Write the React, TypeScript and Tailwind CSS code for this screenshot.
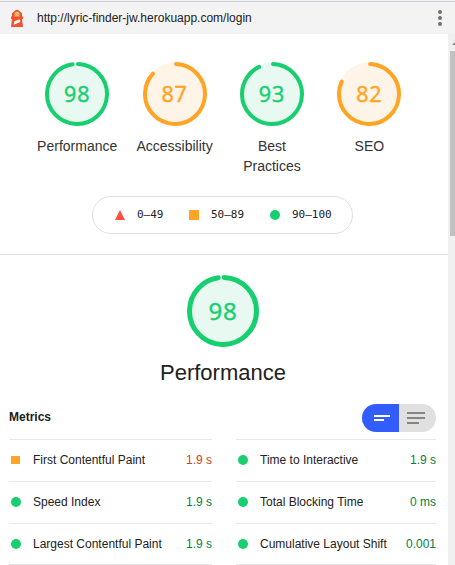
import React from "react";

type Rating = "pass" | "average";

const ringColor: Record<Rating, string> = { pass: "#18cf70", average: "#ffa424" };
const ringFill: Record<Rating, string> = { pass: "#e8f9f1", average: "#fff4e8" };

function Gauge({ score, rating, size, stroke, sweep, textClass }: {
  score: number; rating: Rating; size: number; stroke: number; sweep: number; textClass: string;
}) {
  const r = (size - stroke) / 2;
  const length = 2 * Math.PI * r;
  return (
    <div className="grid place-items-center">
      <svg className="col-start-1 row-start-1 block" width={size} height={size} viewBox={`0 0 ${size} ${size}`}>
        <circle cx={size / 2} cy={size / 2} r={size / 2 - 0.5} fill={ringFill[rating]} />
        <circle
          cx={size / 2} cy={size / 2} r={r} fill="none" stroke={ringColor[rating]} strokeWidth={stroke}
          strokeLinecap="round" strokeDasharray={`${length * sweep} ${length}`}
          transform={`rotate(-88 ${size / 2} ${size / 2})`}
        />
      </svg>
      <span className={`col-start-1 row-start-1 font-medium [-webkit-text-stroke:0.5px] ${textClass}`} style={{ color: ringColor[rating] }}>
        {score}
      </span>
    </div>
  );
}

const categories: { label: string; score: number; rating: Rating; sweep: number }[] = [
  { label: "Performance", score: 98, rating: "pass", sweep: 0.969 },
  { label: "Accessibility", score: 87, rating: "average", sweep: 0.862 },
  { label: "Best Practices", score: 93, rating: "pass", sweep: 0.922 },
  { label: "SEO", score: 82, rating: "average", sweep: 0.811 },
];

type Metric = { name: string; value: string; rating: Rating };

const leftMetrics: Metric[] = [
  { name: "First Contentful Paint", value: "1.9 s", rating: "average" },
  { name: "Speed Index", value: "1.9 s", rating: "pass" },
  { name: "Largest Contentful Paint", value: "1.9 s", rating: "pass" },
];
const rightMetrics: Metric[] = [
  { name: "Time to Interactive", value: "1.9 s", rating: "pass" },
  { name: "Total Blocking Time", value: "0 ms", rating: "pass" },
  { name: "Cumulative Layout Shift", value: "0.001", rating: "pass" },
];

function MetricColumn({ items, className }: { items: Metric[]; className: string }) {
  return (
    <div className={`border-b border-[#e8e8e8] ${className}`}>
      {items.map((m, i) => (
        <div key={m.name} className={`flex items-center border-t border-[#e8e8e8] text-xs ${i === 2 ? "h-[41px]" : "h-[42px] pb-px"}`}>
          <span className="flex w-6 shrink-0 pl-[2px]">
            {m.rating === "average" ? (
              <span className="h-2 w-[9px] bg-[#ffa424]" />
            ) : (
              <span className="size-[10px] rounded-full bg-[#18cf70]" />
            )}
          </span>
          <span className="whitespace-nowrap text-[#212121]">{m.name}</span>
          <span className={`ml-auto whitespace-nowrap ${m.rating === "average" ? "text-[#d04020]" : "text-[#008146]"}`}>{m.value}</span>
        </div>
      ))}
    </div>
  );
}

function LighthouseIcon() {
  return (
    <svg className="block" width="14" height="19" viewBox="0 0 14 19">
      <path d="M2 4.2 5.5 1.2Q7 .2 8.5 1.2L12 4.2V7.5h1v2.6h-1L13 18H1l1-7.9H1V7.5h1z" fill="#f4502c" />
      <path d="M4.6 3.6Q7 2 9.4 3.6v3.9H4.6z" fill="#fac26b" />
      <path d="M4.2 12.2 10 10.2l.3 2.9-6.5 2.6z" fill="#fff" />
    </svg>
  );
}

export default function App() {
  return (
    <div className="flex h-[565px] w-[455px] flex-col overflow-hidden bg-white font-['Liberation_Sans',Arial,sans-serif] text-[#212121]">
      <header className="flex h-[34px] shrink-0 flex-col bg-[#f3f3f3]">
        <div className="mt-px h-px bg-[#cbcdd5]" />
        <div className="flex flex-1 items-center pl-[10px] pr-[13px]">
          <LighthouseIcon />
          <span className="ml-[13px] text-xs">http://lyric-finder-jw.herokuapp.com/login</span>
          <svg className="ml-auto" width="4" height="18" viewBox="0 0 4 18" fill="#707070">
            <circle cx="2" cy="3" r="2" /><circle cx="2" cy="9" r="2" /><circle cx="2" cy="15" r="2" />
          </svg>
        </div>
      </header>
      <div className="flex flex-1 overflow-hidden">
        <main className="w-[448px] shrink-0">
          <section className="h-[221px] border-b border-[#e0e0e0]">
            <div className="flex pl-[28.5px] pt-[28px]">
              {categories.map((c) => (
                <div key={c.label} className="flex w-[97.4px] flex-col items-center">
                  <Gauge score={c.score} rating={c.rating} size={64} stroke={4} sweep={c.sweep} textClass="font-['Open_Sans'] text-[21.5px] leading-6 tracking-[0.9px]" />
                  <span className="mt-[10px] w-[82px] text-center text-sm leading-5 text-[#333]">{c.label}</span>
                </div>
              ))}
            </div>
            <div className="ml-[92px] mt-5 flex h-[38px] w-[261px] items-center rounded-full border border-[#e0e0e0] pl-[22px] font-['DejaVu_Sans_Mono',monospace] text-[11px]">
              <svg width="10" height="10" viewBox="0 0 10 10"><path d="M5 0 10 10H0z" fill="#ff4e42" /></svg>
              <span className="ml-3 w-[52px]">0–49</span>
              <span className="size-[10px] bg-[#ffa424]" />
              <span className="ml-3 w-[59px]">50–89</span>
              <span className="size-[10px] rounded-full bg-[#18cf70]" />
              <span className="ml-3">90–100</span>
            </div>
          </section>
          <section className="flex flex-col items-center pr-[2px] pt-5">
            <Gauge score={98} rating="pass" size={72} stroke={5} sweep={0.97} textClass="font-['Open_Sans'] text-[24px] leading-7 tracking-[0.8px]" />
            <h2 className="mt-[10px] text-[22px] leading-8">Performance</h2>
          </section>
          <section className="pl-[9px] pr-3 pt-[15px]">
            <div className="flex h-7 items-center">
              <h3 className="pb-[2px] text-xs font-bold">Metrics</h3>
              <div className="ml-auto flex overflow-hidden rounded-full">
                <div className="flex h-7 w-[37px] flex-col items-start justify-center gap-[2px] bg-[#335cff] pl-3">
                  <span className="h-[2px] w-4 bg-white" />
                  <span className="h-[2px] w-[10px] bg-white" />
                </div>
                <div className="flex h-7 w-[37px] flex-col items-start justify-center gap-[3px] bg-[#e0e0e0] pl-2">
                  <span className="h-[2px] w-[18px] bg-[#858585]" />
                  <span className="h-[2px] w-[18px] bg-[#858585]" />
                  <span className="h-[2px] w-3 bg-[#858585]" />
                </div>
              </div>
            </div>
            <div className="mt-[7px] flex justify-between">
              <MetricColumn items={leftMetrics} className="w-[203px]" />
              <MetricColumn items={rightMetrics} className="w-[200px]" />
            </div>
          </section>
        </main>
        <aside className="flex w-[7px] shrink-0 flex-col items-end bg-[#f0f0f0]">
          <svg className="mt-[8px] shrink-0" width="3" height="4" viewBox="0 0 3 4"><path d="M0 3 3 0v3z" fill="#8c8c8c" /></svg>
          <div className="mt-[5px] h-[185px] w-[5px] shrink-0 bg-[#c1c1c1]" />
        </aside>
      </div>
    </div>
  );
}
